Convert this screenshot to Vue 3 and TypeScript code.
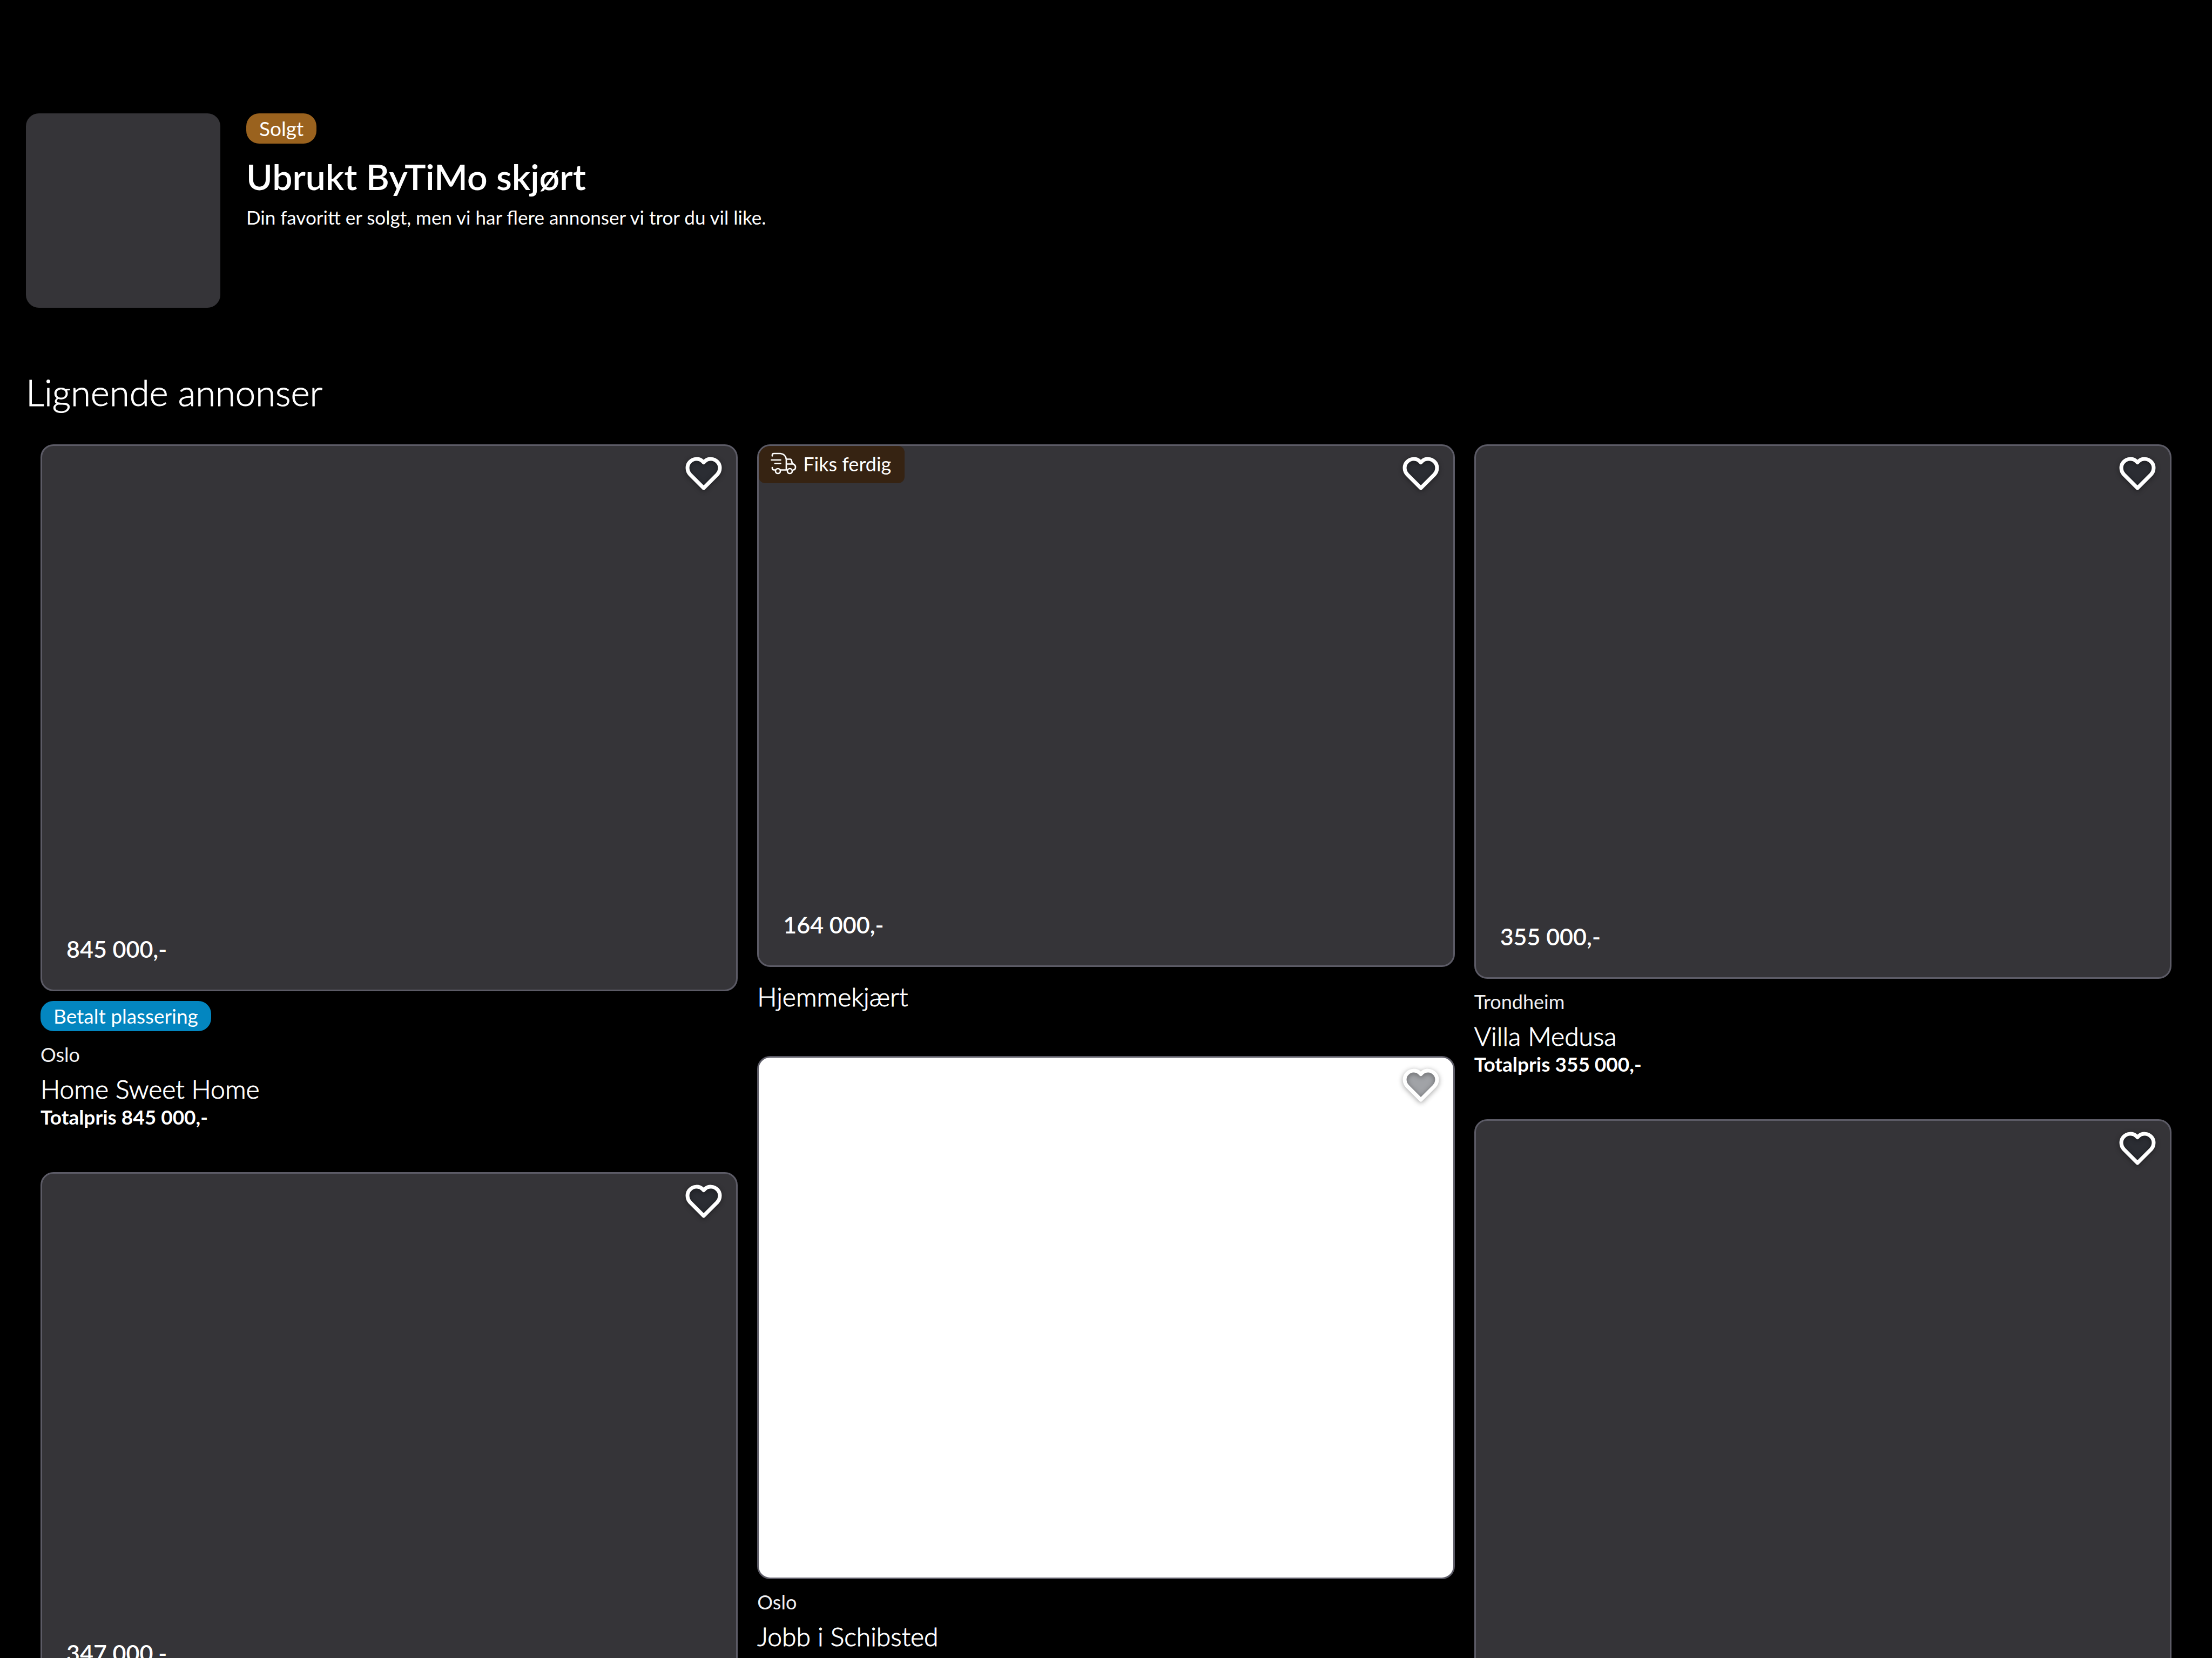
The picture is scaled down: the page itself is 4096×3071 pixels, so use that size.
<script setup lang="ts">
interface Ad {
  id: number
  title: string
  ratio: string
  price?: string
  location?: string
  total?: string
  sponsored?: boolean
  shipping?: boolean
  light?: boolean
}

const columns: Ad[][] = [
  [
    { id: 1, title: 'Home Sweet Home', ratio: '1292 / 1014', price: '845 000,-', location: 'Oslo', total: 'Totalpris 845 000,-', sponsored: true },
    { id: 4, title: '', ratio: '4 / 3', price: '347 000,-' },
  ],
  [
    { id: 2, title: 'Hjemmekjært', ratio: '4 / 3', price: '164 000,-', shipping: true },
    { id: 5, title: 'Jobb i Schibsted', ratio: '4 / 3', location: 'Oslo', light: true },
  ],
  [
    { id: 3, title: 'Villa Medusa', ratio: '1292 / 991', price: '355 000,-', location: 'Trondheim', total: 'Totalpris 355 000,-' },
    { id: 6, title: '', ratio: '1 / 1' },
  ],
]

const heart = 'M33 57 L8 32 C1.500 25 1.500 14.500 7.500 8.500 C14 1.500 24.500 1.500 31 7.500 L33 9.500 L35 7.500 C41.500 1.500 52 1.500 58.500 8.500 C64.500 14.500 64.500 25 58 32 Z'
</script>

<template>
  <main class="page">
    <header class="sold">
      <div class="thumb"></div>
      <div class="info">
        <span class="badge sold-badge">Solgt</span>
        <h1>Ubrukt ByTiMo skjørt</h1>
        <p>Din favoritt er solgt, men vi har flere annonser vi tror du vil like.</p>
      </div>
    </header>

    <h2>Lignende annonser</h2>

    <section class="grid">
      <div v-for="(column, i) in columns" :key="i" class="column">
        <article v-for="ad in column" :key="ad.id" class="ad">
          <div class="picture" :class="{ light: ad.light }" :style="{ aspectRatio: ad.ratio }">
            <div v-if="ad.shipping" class="shipping">
              <svg viewBox="0 0 48 42" fill="none" stroke="#fff" stroke-width="2.700" stroke-linecap="round" stroke-linejoin="round" aria-hidden="true">
                <path d="M3 6.500V5q0-3 3-3h12q10 1 11 11v19M1.500 14h17M8 20.500h10.500M3 28v1q0 3.500 3.500 3.500H8M18.500 32.500H30M29 12.500h7q2 0 2.500 2l1.500 6q6 2.500 6 6.500 0 5-4 5.500M29 21.500h11.500" />
                <circle cx="13.500" cy="34.500" r="4.500" />
                <circle cx="35.500" cy="34.500" r="4.500" />
              </svg>
              <span>Fiks ferdig</span>
            </div>
            <button class="favorite" type="button" aria-label="Legg til favoritt">
              <svg viewBox="0 0 66 60" aria-hidden="true">
                <path class="heart-fill" :d="heart" />
                <path class="heart-line" :d="heart" />
              </svg>
            </button>
            <span v-if="ad.price" class="price">{{ ad.price }}</span>
          </div>
          <div v-if="ad.title" class="details">
            <span v-if="ad.sponsored" class="badge paid-badge">Betalt plassering</span>
            <span v-if="ad.location" class="location">{{ ad.location }}</span>
            <h3>{{ ad.title }}</h3>
            <span v-if="ad.total" class="total">{{ ad.total }}</span>
          </div>
        </article>
      </div>
    </section>
  </main>
</template>

<style>
body {
  margin: 0;
  background: #000;
}
</style>

<style scoped>
.page {
  box-sizing: border-box;
  height: 100vh;
  padding-top: 210px;
  overflow-y: auto;
  scrollbar-width: none;
  background: #000;
  color: #fff;
  font-family: Lato, "Liberation Sans", sans-serif;
  font-size: 36px;
  line-height: 48px;
}

h1,
h2,
h3,
p {
  margin: 0;
}

.sold {
  display: flex;
  gap: 48px;
  padding: 0 48px;
}

.thumb {
  flex: none;
  width: 360px;
  height: 360px;
  border-radius: 24px;
  background: #353438;
}

.info {
  display: flex;
  flex-direction: column;
  align-items: flex-start;
}

.info p {
  font-size: 35px;
}

.badge {
  padding: 4px 24px;
  border-radius: 24px;
  font-size: 37px;
}

.sold-badge {
  background: #9a621e;
}

.paid-badge {
  margin-bottom: 19px;
  background: #0386c0;
}

h1 {
  margin: 19px 0 9px;
  font-size: 66px;
  line-height: 84px;
  font-weight: 600;
}

h2 {
  margin: 114px 48px 55px;
  font-size: 67px;
  line-height: 84px;
  font-weight: 300;
  -webkit-text-stroke: 1px currentColor;
}

.grid {
  display: grid;
  grid-template-columns: repeat(3, minmax(0, 1fr));
  gap: 36px;
  padding: 0 75px;
}

.column {
  display: flex;
  flex-direction: column;
  gap: 83px;
}

.picture {
  box-sizing: border-box;
  position: relative;
  display: flex;
  align-items: flex-end;
  overflow: hidden;
  border: 3px solid #5c5b66;
  border-radius: 24px;
  background: #353438;
}

.picture.light {
  background: #fff;
}

.shipping {
  position: absolute;
  top: 0;
  left: 0;
  display: flex;
  align-items: center;
  gap: 12px;
  padding: 9px 25px 12px 22px;
  border-radius: 12px;
  background: #362312;
}

.shipping svg {
  width: 48px;
  height: 42px;
}

.favorite {
  position: absolute;
  top: 9px;
  right: 12px;
  padding: 12px 15px;
  border: 0;
  background: none;
}

.favorite svg {
  display: block;
  width: 66px;
  height: 60px;
  overflow: visible;
}

.heart-fill {
  fill: rgba(31, 36, 46, 0.42);
}

.heart-line {
  fill: none;
  stroke: #fff;
  stroke-width: 7;
  stroke-linejoin: round;
  filter: drop-shadow(0 2px 5px rgba(0, 0, 0, 0.4));
}

.price {
  padding: 0 45px 51px;
  font-size: 43px;
  font-weight: 600;
}

.details {
  display: flex;
  flex-direction: column;
  align-items: flex-start;
  padding-top: 18px;
}

.location {
  margin-bottom: 3px;
  color: #f0f0f2;
}

h3 {
  margin-top: 10px;
  font-size: 48px;
  line-height: 54px;
  font-weight: 300;
  -webkit-text-stroke: 1px currentColor;
}

.total {
  margin-top: 6px;
  font-size: 37px;
  line-height: 38px;
  font-weight: 700;
}
</style>
